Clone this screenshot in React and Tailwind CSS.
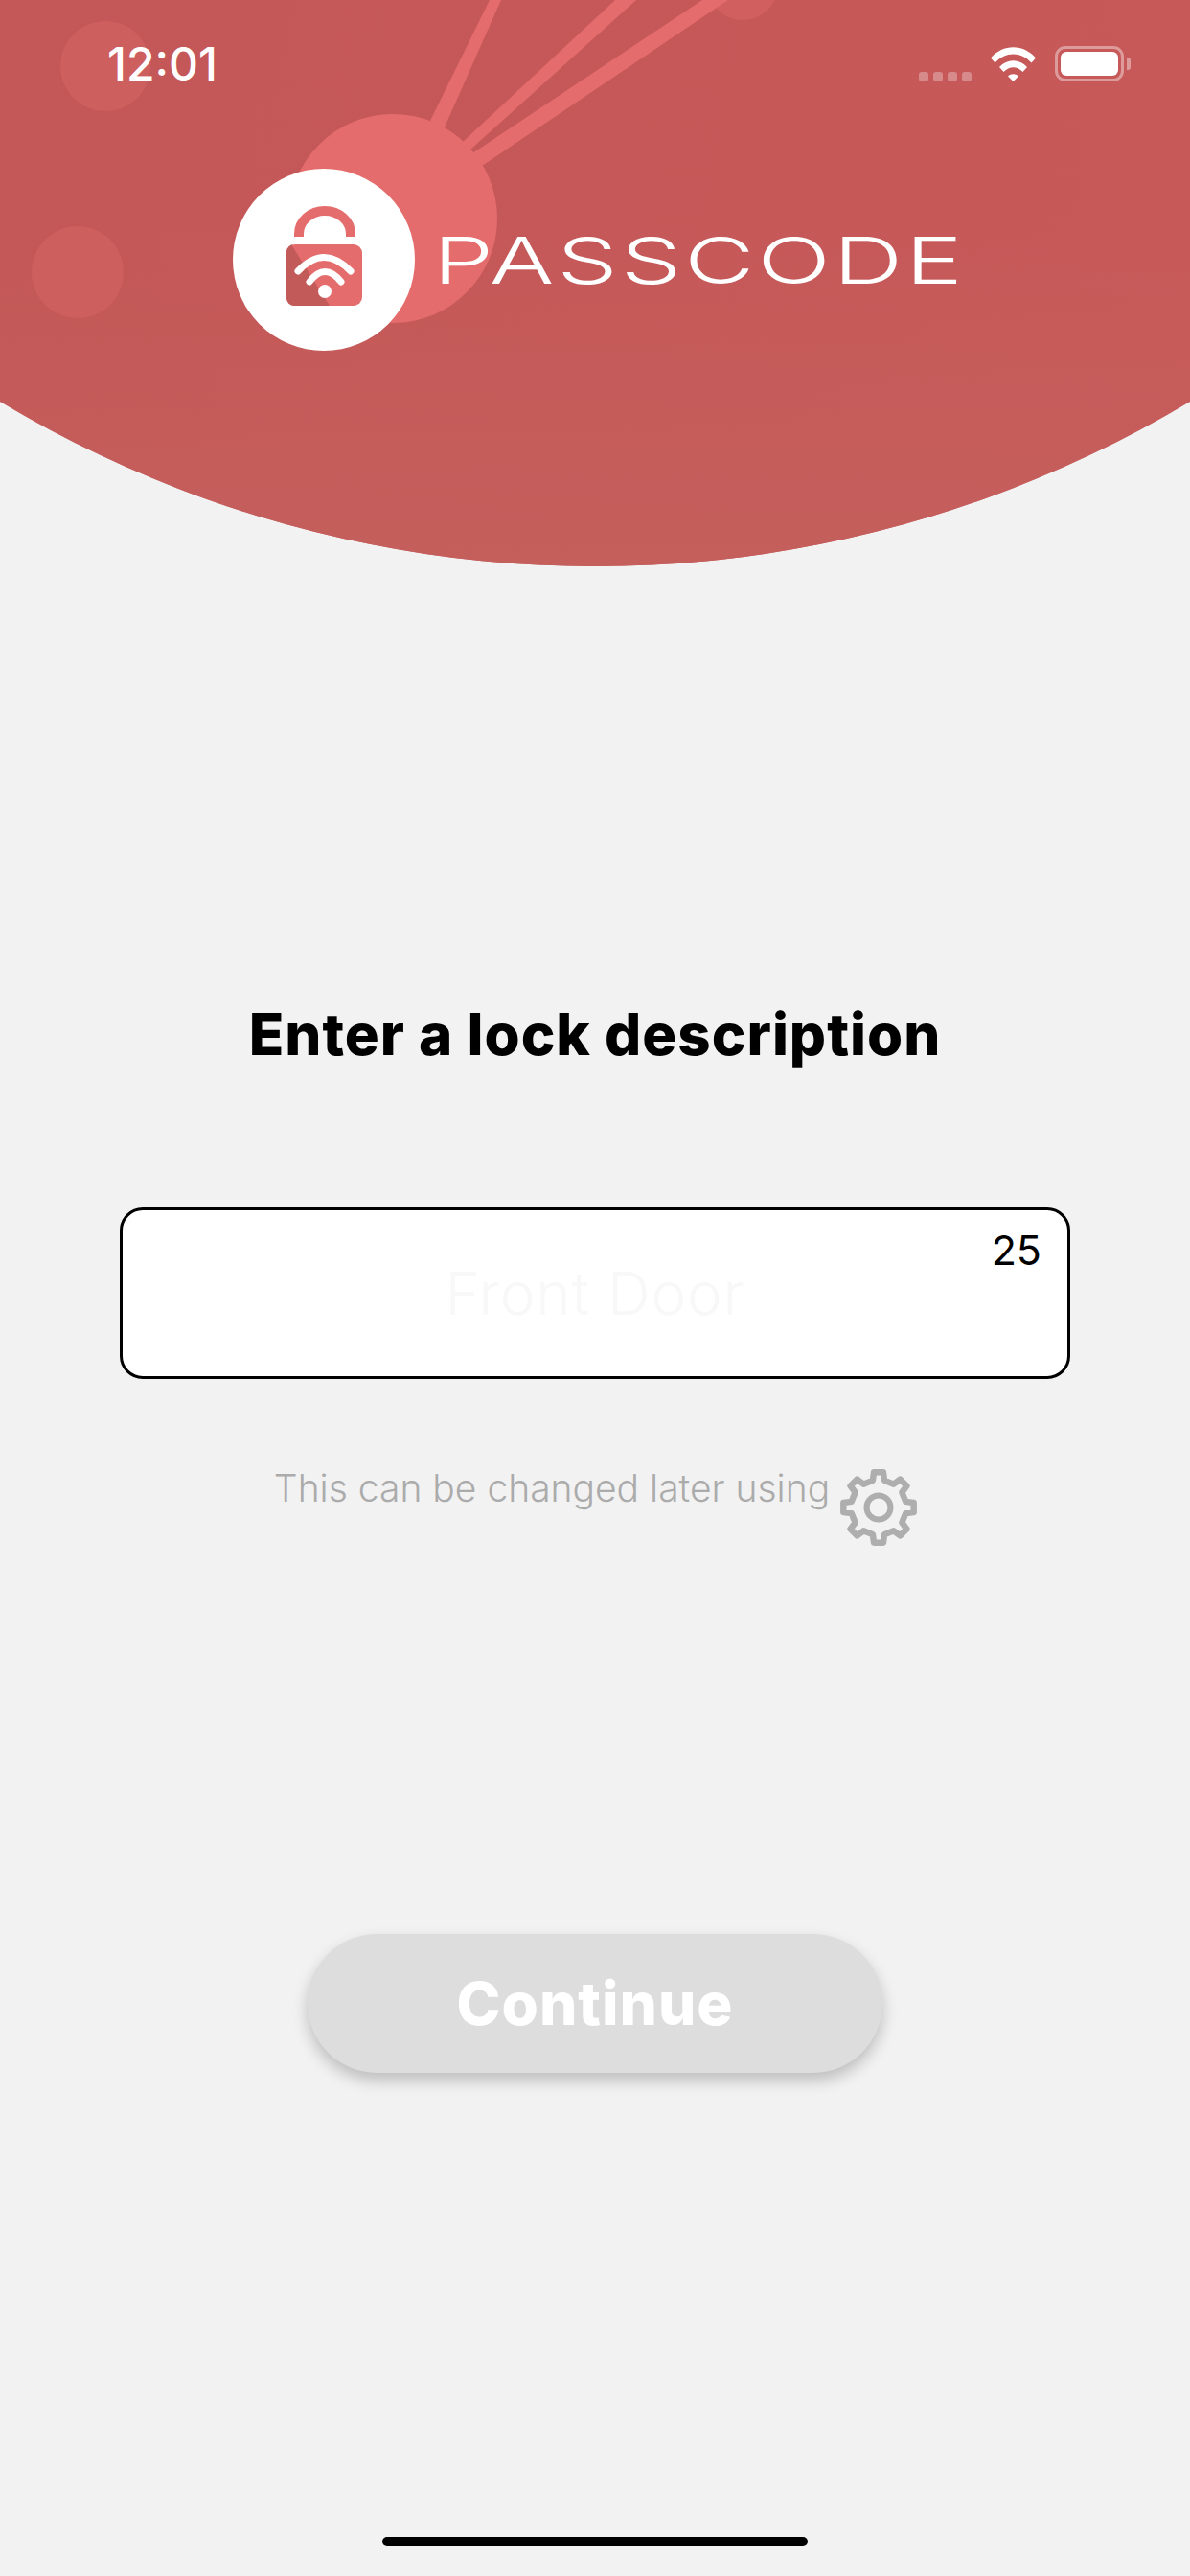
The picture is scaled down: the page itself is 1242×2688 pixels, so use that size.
import React from "react";

const sans = "font-['Inter','Liberation_Sans',sans-serif]";

function gearPath(cx, cy, teeth, rOut, rIn) {
  const pts = [];
  const step = (Math.PI * 2) / teeth;
  for (let i = 0; i < teeth; i++) {
    const a = i * step - Math.PI / 2;
    const w = step * 0.17;
    const v = step * 0.27;
    const P = (r, t) => `${(cx + r * Math.cos(t)).toFixed(2)} ${(cy + r * Math.sin(t)).toFixed(2)}`;
    pts.push(`${i === 0 ? "M" : "L"}${P(rIn, a - v)}`);
    pts.push(`L${P(rOut, a - w)}`);
    pts.push(`L${P(rOut, a + w)}`);
    pts.push(`L${P(rIn, a + v)}`);
  }
  return pts.join(" ") + "Z";
}

function HeaderArt() {
  return (
    <svg className="absolute left-0 top-0" width="1242" height="591" viewBox="0 0 1242 591">
      <circle cx="110" cy="69" r="47" fill="#CE5F5F" />
      <circle cx="81" cy="284" r="48" fill="#CE5F5F" />
      <circle cx="775" cy="-16" r="37" fill="#D15F5F" />
      <polygon points="449,126 511,0 523,0 463,135" fill="#E56C6C" />
      <polygon points="483,148 642,0 664,0 491,156" fill="#E56C6C" />
      <polygon points="493,160 733,0 760,0 503,173" fill="#E56C6C" />
      <circle cx="410" cy="228" r="109" fill="#E56C6C" />
    </svg>
  );
}

function LockBadge() {
  return (
    <svg width="190" height="190" viewBox="243 176 190 190" className="shrink-0">
      <circle cx="338" cy="271" r="95" fill="#FFFFFF" />
      <path d="M312 247 V244 a27 24 0 0 1 54 0 V247" fill="none" stroke="#E56C6C" strokeWidth="10" />
      <rect x="299" y="255" width="79" height="64" rx="9" fill="#E56C6C" />
      <path d="M304 255 H307 a8 8 0 0 0 -8 8 V311 a8 8 0 0 0 8 8 H344 Z" fill="#C25A5A" />
      <path d="M311 283 Q338 254 366 283" fill="none" stroke="#FFFFFF" strokeWidth="7" strokeLinecap="round" />
      <path d="M323 294 Q339 273 356 294" fill="none" stroke="#FFFFFF" strokeWidth="7" strokeLinecap="round" />
      <circle cx="339" cy="304" r="7" fill="#FFFFFF" />
    </svg>
  );
}

function StatusBar() {
  return (
    <div className="relative flex h-[100px] w-full items-start justify-between pl-[112px] pr-[69px] pt-[42px]">
      <span className={`${sans} text-[48px] font-medium leading-[50px] text-white`}>12:01</span>
      <div className="flex items-center pt-[6px]">
        <div className="mr-[20px] mt-[26px] flex gap-[5px]">
          <div className="h-[10px] w-[10px] rounded-[3px] bg-white/30" />
          <div className="h-[10px] w-[10px] rounded-[3px] bg-white/30" />
          <div className="h-[10px] w-[10px] rounded-[3px] bg-white/30" />
          <div className="h-[10px] w-[10px] rounded-[3px] bg-white/30" />
        </div>
        <svg width="47" height="36" viewBox="0 0 47 36" className="mr-[20px]">
          <path d="M0 11.5 C13 -3.5 34 -3.5 47 11.5 L42.5 16.5 C31.5 4.5 15.5 4.5 4.5 16.5Z" fill="#fff" />
          <path d="M9 21 C17 12 30 12 38 21 L33.5 26 C27.5 19.5 19.5 19.5 13.5 26Z" fill="#fff" />
          <path d="M18 30.5 C21 27.5 26 27.5 29 30.5 L23.5 36Z" fill="#fff" />
        </svg>
        <div className="relative h-[37px] w-[72px] rounded-[11px] border-[3px] border-white/40 p-[3px]">
          <div className="h-full w-full rounded-[6px] bg-white" />
          <div className="absolute right-[-10px] top-[9px] h-[13px] w-[4px] rounded-r-[3px] bg-white/40" />
        </div>
      </div>
    </div>
  );
}

export default function App() {
  return (
    <div className="flex min-h-[2688px] w-full flex-col items-center bg-[#F2F2F2]">
      <header className="relative h-[591px] w-full shrink-0 overflow-hidden">
        <div className="absolute left-[-586px] top-[-1823px] h-[2414px] w-[2414px] overflow-hidden rounded-full bg-[linear-gradient(100deg,#C15556_0%,#C95A5A_100%)]" />
        <div className="absolute left-0 top-0 h-[591px] w-full [clip-path:circle(1207px_at_621px_-616px)] bg-[linear-gradient(180deg,rgba(196,90,90,0)_40%,#C45F5C_100%)]" />
        <HeaderArt />
        <StatusBar />
        <div className="relative mt-[76px] flex items-center pl-[243px]">
          <LockBadge />
          <span className={`${sans} ml-[19px] mt-[2px] inline-block origin-left scale-x-[1.5] text-[67px] font-light leading-[68px] tracking-[2px] text-white`}>PASSCODE</span>
        </div>
      </header>

      <h1 className={`${sans} mt-[448px] text-[60px] font-extrabold leading-[80px] tracking-[1px] text-black`}>Enter a lock description</h1>

      <div className="relative mt-[141px] flex h-[179px] w-[992px] items-center justify-center rounded-[24px] border-[3px] border-black bg-white">
        <span className={`${sans} text-[62px] font-light leading-[80px] tracking-[0.8px] text-[#F8F8F8]`}>Front Door</span>
        <span className="absolute right-[27px] top-[15px] font-['Inter',sans-serif] text-[43px] leading-[52px] text-black">25</span>
      </div>

      <div className="mt-[94px] flex items-start pl-[1px]">
        <span className={`${sans} -mt-[5px] text-[39px] font-light leading-[50px] text-[#ABABAB]`}>This can be changed later using</span>
        <svg width="80" height="80" viewBox="0 0 80 80" className="ml-[11px]">
          <path d={gearPath(40, 40, 8, 37, 29)} fill="none" stroke="#AEAEAE" strokeWidth="6.5" strokeLinejoin="round" />
          <circle cx="40" cy="40" r="12.5" fill="none" stroke="#AEAEAE" strokeWidth="6" />
        </svg>
      </div>

      <button className="mt-[405px] flex h-[145px] w-[600px] items-center justify-center rounded-full bg-[#DDDDDD] shadow-[0_8px_16px_rgba(0,0,0,0.22)]">
        <span className={`${sans} text-[62px] font-extrabold leading-[80px] tracking-[1px] text-white`}>Continue</span>
      </button>

      <div className="mt-[484px] h-[10px] w-[444px] rounded-full bg-black" />
    </div>
  );
}
